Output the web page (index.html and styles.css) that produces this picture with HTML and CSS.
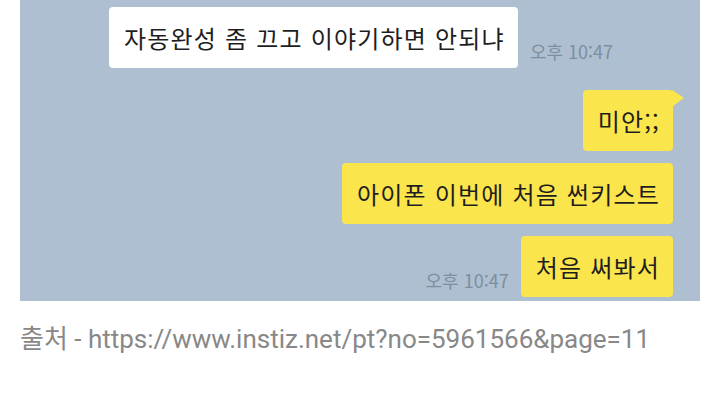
FILE: index.html
```html
<!DOCTYPE html>
<html lang="ko">
<head>
  <meta charset="UTF-8">
  <title>출처</title>
  <link rel="stylesheet" href="styles.css">
</head>
<body>
  <div class="post">
    <!-- 캡처 이미지 영역 -->
    <div class="chat">
      <div class="row">
        <div class="bubble white">자동완성 좀 끄고 이야기하면 안되냐</div>
        <span class="time">오후 10:47</span>
      </div>
      <div class="row mine first">
        <div class="bubble yellow tail">미안;;</div>
      </div>
      <div class="row mine">
        <div class="bubble yellow">아이폰 이번에 처음 썬키스트</div>
      </div>
      <div class="row mine">
        <span class="time">오후 10:47</span>
        <div class="bubble yellow">처음 써봐서</div>
      </div>
    </div>
    <!-- 출처 -->
    <p class="source">출처 - https://www.instiz.net/pt?no=5961566&amp;page=11</p>
  </div>
</body>
</html>
```
FILE: styles.css
```css
body {
  margin: 0;
  background: #fff;
}
.chat {
  width: 680px;
  height: 301px;
  margin-left: 20px;
  padding: 7px 27px 0 89px;
  box-sizing: border-box;
  background: #adbfd0;
  overflow: hidden;
  font-family: "Noto Sans CJK KR", sans-serif;
}
.row {
  display: flex;
  align-items: flex-end;
  gap: 12px;
}
.row.mine {
  justify-content: flex-end;
  margin-top: 12px;
}
.row.mine.first {
  margin-top: 22px;
}
.bubble {
  position: relative;
  height: 61px;
  display: flex;
  align-items: center;
  padding: 0 13px 0 15px;
  border-radius: 4px;
  font-size: 24px;
  letter-spacing: 1.2px;
  color: #1e1e1e;
  box-sizing: border-box;
}
.white {
  background: #fff;
}
.yellow {
  background: #fbe54c;
}
.tail::after {
  content: "";
  position: absolute;
  top: 0;
  right: -11px;
  width: 12px;
  height: 17px;
  background: #fbe54c;
  clip-path: polygon(0 0, 100% 45%, 0 100%);
}
.time {
  padding-bottom: 4px;
  font-size: 18px;
  color: #7d8ea0;
}
.source {
  margin: 21px 0 0 20px;
  font-family: Roboto, "Noto Sans CJK KR", sans-serif;
  font-size: 26px;
  line-height: 34px;
  color: #888;
}
```
